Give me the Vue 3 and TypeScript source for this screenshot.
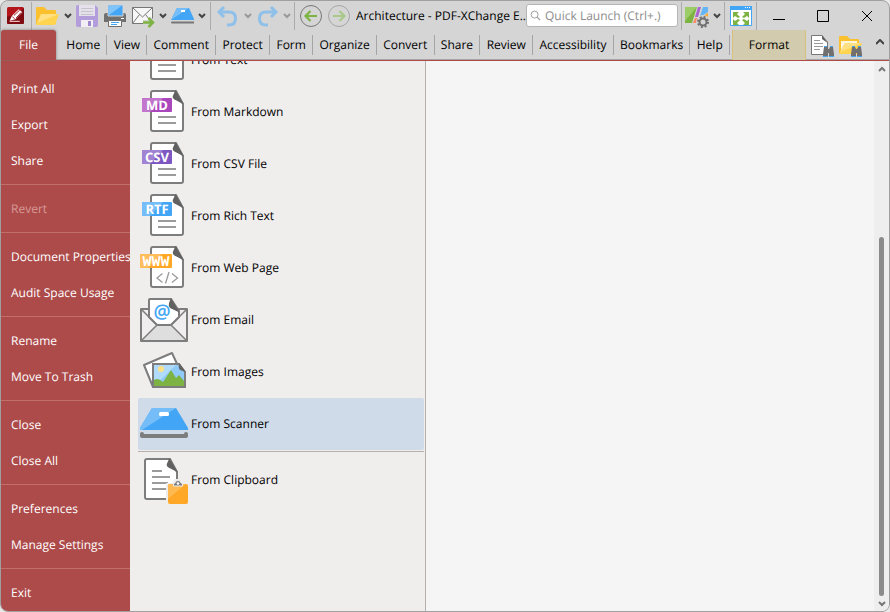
<script setup lang="ts">
import { ref } from 'vue'

interface MenuEntry {
  label: string
  disabled?: boolean
}

interface Source {
  label: string
  kind: 'doc' | 'web' | 'email' | 'images' | 'scanner' | 'clipboard'
  badge?: string
  dark?: string
  light?: string
}

const tabs: string[] = [
  'Home', 'View', 'Comment', 'Protect', 'Form', 'Organize',
  'Convert', 'Share', 'Review', 'Accessibility', 'Bookmarks', 'Help',
]

const menuGroups: MenuEntry[][] = [
  [{ label: 'Print All' }, { label: 'Export' }, { label: 'Share' }],
  [{ label: 'Revert', disabled: true }],
  [{ label: 'Document Properties' }, { label: 'Audit Space Usage' }],
  [{ label: 'Rename' }, { label: 'Move To Trash' }],
  [{ label: 'Close' }, { label: 'Close All' }],
  [{ label: 'Preferences' }, { label: 'Manage Settings' }],
  [{ label: 'Exit' }],
]

const sources: Source[] = [
  { label: 'From Text', kind: 'doc', badge: 'TXT', dark: '#777777', light: '#999999' },
  { label: 'From Markdown', kind: 'doc', badge: 'MD', dark: '#ab47bc', light: '#c175cd' },
  { label: 'From CSV File', kind: 'doc', badge: 'CSV', dark: '#7e57c2', light: '#a083d3' },
  { label: 'From Rich Text', kind: 'doc', badge: 'RTF', dark: '#42a5f5', light: '#74bdf8' },
  { label: 'From Web Page', kind: 'web', badge: 'WWW', dark: '#ffa726', light: '#ffbd5c' },
  { label: 'From Email', kind: 'email' },
  { label: 'From Images', kind: 'images' },
  { label: 'From Scanner', kind: 'scanner' },
]

const selected = ref<string>('From Scanner')
const query = ref<string>('')
</script>

<template>
  <div class="window">
    <header class="titlebar">
      <div class="group logo-group">
        <svg class="logo" viewBox="0 0 16 16" aria-hidden="true">
          <rect width="16" height="16" rx="1.5" fill="#b3151b" />
          <path d="M0 9Q9 8 16 1V14.500Q16 16 14.500 16H1.500Q0 16 0 14.500Z" fill="#7d0b10" />
          <path d="M2.500 13L4.500 8.500L11 2L14.500 5L8 11.500Z" fill="#fff" />
          <path d="M5 9L7 11M6.500 8L12 2.800M8.500 10.500L13.500 5" stroke="#a80f15" stroke-width=".9" />
          <path d="M2.500 13.500H12" stroke="#e9b9bb" />
        </svg>
      </div>

      <div class="group file-group">
        <button class="tool" aria-label="Open">
          <svg class="icon" viewBox="0 0 24 24">
            <path d="M0 4Q0 3 1 3H8L11 6H19Q20 6 20 7V20H0Z" fill="#fbc02d" />
            <path d="M5 10H23L19 21H0Z" fill="#ffd54f" />
            <path d="M5 10H23L1 19Z" fill="#ffe082" />
          </svg>
        </button>
        <button class="drop" aria-label="Open options"><svg viewBox="0 0 8 6"><path d="M1 1L4 4L7 1" /></svg></button>
        <button class="tool" aria-label="Save">
          <svg class="icon" viewBox="0 0 24 24">
            <path d="M1 3Q1 1 3 1H20L23 4V21Q23 23 21 23H3Q1 23 1 21Z" fill="#b39ddb" />
            <path d="M4 1H20V12H4Z" fill="#e4e0ec" />
            <path d="M6 4.500H18M6 7.500H18M6 10.500H18" stroke="#c7c4cc" />
            <path d="M6 16H18V23H6Z" fill="#f1eef6" />
            <path d="M13 17H16V22H13Z" fill="#9e86cc" />
          </svg>
        </button>
        <button class="tool" aria-label="Print">
          <svg class="icon" viewBox="0 0 24 24">
            <path d="M1 11Q1 9 3 9H21Q23 9 23 11V18H1Z" fill="#707070" />
            <path d="M5 1H20V12H5Z" fill="#42a5f5" stroke="#d5d5d5" />
            <path d="M5.500 1.500H19L5.500 11.500Z" fill="#81c4fa" />
            <path d="M18 14.500H21" stroke="#fff" />
            <path d="M5.500 16.500H18.500V22.500H5.500Z" fill="#fff" stroke="#707070" />
            <path d="M8 18.500H16M8 20.500H14" stroke="#42a5f5" />
          </svg>
        </button>
        <button class="tool" aria-label="Send by email">
          <svg class="icon" viewBox="0 0 24 24">
            <path d="M1.500 3.500H21.500V19.500H1.500Z" fill="#f7f7f7" stroke="#777" />
            <path d="M1.500 3.500L11.500 13L21.500 3.500M1.500 19.500L8.500 10.500M21.500 19.500L14.500 10.500" fill="none" stroke="#777" />
            <path d="M12 18.500H22M18 14.500L22 18.500L18 22.500" fill="none" stroke="#d5d5d5" stroke-width="5" />
            <path d="M12 18.500H21.500M17.500 14L22 18.500L17.500 23" fill="none" stroke="#7cb342" stroke-width="2.500" />
          </svg>
        </button>
        <button class="drop" aria-label="Email options"><svg viewBox="0 0 8 6"><path d="M1 1L4 4L7 1" /></svg></button>
        <button class="tool" aria-label="Scan">
          <svg class="icon" viewBox="0 0 24 24">
            <path d="M7 4H19L24.500 16H1Z" fill="#42a5f5" />
            <path d="M7 4H19L1 16Z" fill="#74bdf8" />
            <path d="M11 7H15" stroke="#fff" stroke-width="2" />
            <path d="M2 18.500H24" stroke="#777" stroke-width="2" stroke-linecap="round" />
          </svg>
        </button>
        <button class="drop" aria-label="Scan options"><svg viewBox="0 0 8 6"><path d="M1 1L4 4L7 1" /></svg></button>
      </div>

      <div class="group history-group">
        <button class="tool" aria-label="Undo">
          <svg class="icon" viewBox="0 0 24 24">
            <path d="M8 3L3 8L8 13M3 8H13Q19.500 8 19.500 14.500Q19.500 21 13 21H11" fill="none" stroke="#8ec0ea" stroke-width="3" />
          </svg>
        </button>
        <button class="drop faded" aria-label="Undo history"><svg viewBox="0 0 8 6"><path d="M1 1L4 4L7 1" /></svg></button>
        <button class="tool" aria-label="Redo">
          <svg class="icon" viewBox="0 0 24 24">
            <path d="M16 3L21 8L16 13M21 8H11Q4.500 8 4.500 14.500Q4.500 21 11 21H13" fill="none" stroke="#8ec0ea" stroke-width="3" />
          </svg>
        </button>
        <button class="drop faded" aria-label="Redo history"><svg viewBox="0 0 8 6"><path d="M1 1L4 4L7 1" /></svg></button>
      </div>

      <div class="group nav-group">
        <button class="tool" aria-label="Back">
          <svg class="icon" viewBox="0 0 24 24">
            <circle cx="11" cy="12" r="10.500" fill="none" stroke="#777" />
            <path d="M17 12H6M10.500 7L5.500 12L10.500 17" fill="none" stroke="#7cb342" stroke-width="2.200" />
          </svg>
        </button>
        <button class="tool" aria-label="Forward">
          <svg class="icon" viewBox="0 0 24 24">
            <circle cx="11" cy="12" r="10.500" fill="none" stroke="#a5a5a5" />
            <path d="M5 12H16M11.500 7L16.500 12L11.500 17" fill="none" stroke="#a9c98a" stroke-width="2.200" />
          </svg>
        </button>
      </div>

      <h1 class="title">Architecture - PDF-XChange E..</h1>

      <label class="search">
        <svg viewBox="0 0 12 12" aria-hidden="true">
          <circle cx="5" cy="5" r="3.800" fill="none" stroke="#999" />
          <path d="M7.800 7.800L11 11" stroke="#999" stroke-width="1.300" />
        </svg>
        <input v-model="query" type="text" placeholder="Quick Launch (Ctrl+.)" aria-label="Quick Launch" />
      </label>

      <div class="group options-group">
        <button class="tool" aria-label="UI options">
          <svg class="icon" viewBox="0 0 24 24">
            <path d="M0 3H12L7 19H0Z" fill="#7cb342" />
            <path d="M0 3H12L0 17Z" fill="#9ccc65" />
            <path d="M13 3H16L13 13H10Z" fill="#ab63d0" />
            <path d="M18 3H23V8L17 12H15Z" fill="#64b5f6" />
            <path d="M18 12L23 9V13H18Z" fill="#ffa726" />
            <path d="M8 19L10 14H14L12 19Z" fill="#ff8a65" />
            <circle cx="18" cy="18" r="7" fill="#d5d5d5" />
            <circle cx="18" cy="18" r="3.500" fill="none" stroke="#707070" stroke-width="2" />
            <circle cx="18" cy="18" r="5" fill="none" stroke="#707070" stroke-width="2" stroke-dasharray="2 1.927" />
          </svg>
        </button>
        <button class="drop" aria-label="UI options menu"><svg viewBox="0 0 8 6"><path d="M1 1L4 4L7 1" /></svg></button>
      </div>

      <div class="group screen-group">
        <button class="tool" aria-label="Full screen">
          <svg class="icon" viewBox="0 0 24 24">
            <path d="M1.500 2.500H22.500V21.500H1.500Z" fill="#fff" stroke="#42a5f5" />
            <path d="M1 2H23V6H1Z" fill="#42a5f5" />
            <path d="M16 3.500H17M18 3.500H19M20 3.500H21" stroke="#fff" />
            <path d="M4 8H10L8 10L11 13L9 14L6 12L4 14ZM20 8H14L16 10L13 13L15 14L18 12L20 14ZM4 21H10L8 19L11 16L9 15L6 17L4 15ZM20 21H14L16 19L13 16L15 15L18 17L20 15Z" fill="#7cb342" />
          </svg>
        </button>
      </div>

      <div class="controls">
        <button aria-label="Minimize"><svg viewBox="0 0 12 12"><path d="M0 9.500H12" /></svg></button>
        <button aria-label="Maximize"><svg viewBox="0 0 12 12"><path d="M.5 .5H11.500V11.500H.5Z" /></svg></button>
        <button aria-label="Close window"><svg viewBox="0 0 12 12"><path d="M1 1L11 11M11 1L1 11" /></svg></button>
      </div>
    </header>

    <nav class="ribbon" aria-label="Ribbon">
      <button class="file-tab">File</button>
      <div class="tabs">
        <button v-for="tab in tabs" :key="tab" class="tab">{{ tab }}</button>
      </div>
      <button class="format-tab">Format</button>
      <div class="finders">
        <button class="tool" aria-label="Find in document">
          <svg class="icon" viewBox="0 0 24 24">
            <path d="M.5 1.500H11L16.500 8V20.500H.5Z" fill="#fff" stroke="#777" />
            <path d="M11 1V5L16.500 9Z" fill="#5f5f5f" />
            <path d="M3 6.500H9M3 9.500H12M3 12.500H12M3 15.500H9" stroke="#999" />
            <path d="M13 13H16L17 15H18L19 13H22L23 20V23H18V19H17V23H12V20Z" fill="#707070" />
            <path d="M13 12.500H16M19 12.500H22M12 22.500H17M18 22.500H23" stroke="#42a5f5" />
          </svg>
        </button>
        <button class="tool" aria-label="Search folders">
          <svg class="icon" viewBox="0 0 24 24">
            <path d="M0 3Q0 2 1 2H8L11 5H19Q20 5 20 6V19H0Z" fill="#fbc02d" />
            <path d="M2 7H18V18H2Z" fill="#fff5dc" />
            <path d="M6 9H23L19 20H0Z" fill="#ffd54f" />
            <path d="M6 9H23L1 18Z" fill="#ffe082" />
            <path d="M13 13H16L17 15H18L19 13H22L23 20V23H18V19H17V23H12V20Z" fill="#707070" />
            <path d="M13 12.500H16M19 12.500H22M12 22.500H17M18 22.500H23" stroke="#42a5f5" />
          </svg>
        </button>
      </div>
      <button class="collapse" aria-label="Collapse ribbon"><svg viewBox="0 0 8 6"><path d="M0 5L4 1L8 5" /></svg></button>
    </nav>

    <div class="backstage">
      <aside class="sidebar">
        <ul v-for="(group, index) in menuGroups" :key="index" class="menu-group">
          <li v-for="entry in group" :key="entry.label">
            <button class="menu-item" :disabled="entry.disabled">{{ entry.label }}</button>
          </li>
        </ul>
      </aside>

      <section class="sources" aria-label="New document">
        <div class="source-list">
          <button
            v-for="source in sources"
            :key="source.label"
            class="source"
            :class="{ selected: selected === source.label }"
            @click="selected = source.label"
          >
            <svg class="source-icon" viewBox="0 0 50 52" aria-hidden="true">
              <template v-if="source.kind === 'doc' || source.kind === 'web'">
                <path d="M15 5H38L45 18V43Q45 45 43 45H15Q13 45 13 43V7Q13 5 15 5Z" fill="#fff" stroke="#7d7d7d" stroke-width="2" />
                <path d="M37.500 4L46 18.500L36.500 13.500Q34 12 35 9.500Z" fill="#616161" />
                <path v-if="source.kind === 'doc'" d="M20 31H38M20 37H38" stroke="#9b9b9b" stroke-width="2" />
                <path v-else d="M24.500 31.500L19 36L24.500 40.500M34 31.500L39.500 36L34 40.500M31 30L27.500 41.500" fill="none" stroke="#9b9b9b" stroke-width="1.300" />
                <rect :x="source.kind === 'web' ? 2 : 4" y="12" :width="source.kind === 'web' ? 32 : 30" height="14" rx="1" :fill="source.dark" />
                <path :d="source.kind === 'web' ? 'M2 13Q2 12 3 12H24L10 26H3Q2 26 2 25Z' : 'M4 13Q4 12 5 12H25L12 26H5Q4 26 4 25Z'" :fill="source.light" />
                <text :x="source.kind === 'web' ? 18 : 19" y="24" text-anchor="middle" class="badge" :class="{ mono: source.kind === 'web' }">{{ source.badge }}</text>
              </template>
              <template v-else-if="source.kind === 'email'">
                <path d="M3 15H49V47H3Z" fill="#f0eeee" stroke="#7d7d7d" stroke-width="2" stroke-linejoin="round" />
                <path d="M19 31H33L48 46H4Z" fill="#dedede" />
                <path d="M11 23V6Q11 5 12 5H33L41 17V23L33 31H19Z" fill="#fff" stroke="#7d7d7d" stroke-width="2" />
                <path d="M33 4L41.500 18.500L32 14Q30 12 31 9Z" fill="#616161" />
                <path d="M3 15L19 31H33L49 15M19 31L3 47M33 31L49 47" fill="none" stroke="#7d7d7d" stroke-width="1.500" />
                <text x="24" y="24" text-anchor="middle" class="at">@</text>
              </template>
              <template v-else-if="source.kind === 'images'">
                <path d="M6 19L34 7L46 33L15 41Z" fill="#fff" stroke="#7d7d7d" stroke-width="2" stroke-linejoin="round" />
                <path d="M15 18H41L47 26V41H15Z" fill="#90caf9" stroke="#7d7d7d" stroke-width="2" />
                <path d="M16 19H38L16 40Z" fill="#b1dbfb" />
                <circle cx="23" cy="23" r="3" fill="#ffe082" />
                <path d="M16 40V34Q20 31 25 36L33 24L38 32L41 29L46 35V40Z" fill="#7cb342" />
                <path d="M41 17L48 26L42 24Q40 22 41 17Z" fill="#616161" />
              </template>
              <template v-else-if="source.kind === 'scanner'">
                <path d="M14 10H38L50 30V32H2V30Z" fill="#42a5f5" />
                <path d="M14 10H38L4 32H2V30Z" fill="#74bdf8" />
                <rect x="21" y="14" width="10" height="4" rx="1.500" fill="#fff" />
                <path d="M2 36Q2 34 4 34Q6 34 6 36H46Q46 34 48 34Q50 34 50 36V38Q50 40 47 40H5Q2 40 2 38Z" fill="#7d7d7d" />
              </template>
            </svg>
            <span>{{ source.label }}</span>
          </button>
          <hr />
          <button class="source" :class="{ selected: selected === 'From Clipboard' }" @click="selected = 'From Clipboard'">
            <svg class="source-icon" viewBox="0 0 50 52" aria-hidden="true">
              <path d="M9 5H32L39 18V43Q39 45 37 45H9Q7 45 7 43V7Q7 5 9 5Z" fill="#fff" stroke="#7d7d7d" stroke-width="2" />
              <path d="M31.500 4L40 18.500L30.500 13.500Q28 12 29 9.500Z" fill="#616161" />
              <path d="M14 17H24M14 23H32M14 29H30M14 35H28" stroke="#9b9b9b" stroke-width="2" />
              <path d="M28 29H34L37 25H43L46 29H50V50H28Z" fill="#f0eded" />
              <rect x="30" y="30" width="20" height="20" rx="2" fill="#ffa726" />
              <path d="M30 32Q30 30 32 30H48L30 45Z" fill="#ffb951" />
              <path d="M35.500 32V30Q36 29 37 29Q37 26.500 40 26.500Q43 26.500 43 29Q44 29 44.500 30V32Z" fill="#7d7d7d" stroke="#f0eded" />
              <circle cx="40" cy="29.500" r="1.300" fill="#fff" />
            </svg>
            <span>From Clipboard</span>
          </button>
        </div>
      </section>

      <main class="canvas"></main>

      <div class="scrollbar">
        <button aria-label="Scroll up"><svg viewBox="0 0 8 6"><path d="M1 5L4 2L7 5" /></svg></button>
        <div class="track"><div class="thumb"></div></div>
        <button aria-label="Scroll down"><svg viewBox="0 0 8 6"><path d="M1 1L4 4L7 1" /></svg></button>
      </div>
    </div>
  </div>
</template>

<style>
body {
  background: #e9e9e9;
}
</style>

<style scoped>
* {
  box-sizing: border-box;
}

.window {
  display: flex;
  flex-direction: column;
  height: 100vh;
  overflow: hidden;
  border: 1px solid #a0a0a0;
  border-radius: 8px;
  background: #d5d5d5;
  color: #000;
  font: 12px/16px "Open Sans", "Noto Sans", sans-serif;
  text-rendering: geometricPrecision;
}

button {
  margin: 0;
  padding: 0;
  border: 0;
  background: none;
  color: inherit;
  font: inherit;
  text-rendering: inherit;
  white-space: nowrap;
}

svg {
  display: block;
}

.titlebar {
  display: flex;
  align-items: center;
  flex: none;
  height: 29px;
}

.group {
  display: flex;
  align-items: center;
  flex: none;
  height: 28px;
  border-right: 1px solid #ababab;
}

.logo-group {
  padding: 0 7px 0 6px;
}

.logo {
  width: 17px;
  height: 17px;
}

.file-group {
  padding: 0 1px 0 4px;
}

.history-group {
  padding-left: 5px;
}

.nav-group {
  padding: 0 4px 0 5px;
  border-right: 0;
}

.options-group {
  margin-left: 3px;
  padding-left: 3px;
  border-left: 1px solid #ababab;
}

.screen-group {
  padding: 0 3px 0 4px;
}

.tool,
.icon {
  flex: none;
  width: 24px;
  height: 24px;
}

.tool + .tool {
  margin-left: 4px;
}

.drop {
  flex: none;
  width: 15px;
  height: 24px;
}

.drop svg,
.collapse svg,
.scrollbar svg {
  width: 8px;
  height: 6px;
  margin: auto;
  fill: none;
  stroke: #444;
  stroke-width: 2;
}

.drop.faded svg {
  stroke: #999;
}

.title {
  flex: 1 1 166px;
  min-width: 0;
  margin: 0;
  overflow: hidden;
  font: inherit;
  white-space: nowrap;
}

.search {
  display: flex;
  align-items: center;
  flex: 0 0 152px;
  gap: 4px;
  height: 23px;
  padding: 0 3px;
  border: 1px solid #b5b5b5;
  border-radius: 3px;
  background: #fff;
}

.search svg {
  flex: none;
  width: 11px;
  height: 11px;
}

.search input {
  width: 100%;
  min-width: 0;
  padding: 0;
  border: 0;
  outline: 0;
  background: none;
  color: #000;
  font: inherit;
  text-rendering: inherit;
}

.search input::placeholder {
  color: #8c8c8c;
  opacity: 1;
}

.controls {
  display: flex;
  flex: none;
}

.controls button {
  width: 44px;
  height: 28px;
}

.controls svg {
  width: 12px;
  height: 12px;
  margin: auto;
  fill: none;
  stroke: #000;
}

.ribbon {
  display: flex;
  flex: none;
  height: 31px;
  border-bottom: 1px solid #ad4a4a;
  box-shadow: inset 0 -1px #a8a4a4;
}

.file-tab {
  flex: none;
  width: 55px;
  border-radius: 3px 3px 0 0;
  background: #ad4a4a;
  box-shadow: 0 0 3px #777;
  color: #fff;
}

.tabs {
  display: flex;
  flex: 0 1 676px;
  align-items: center;
  padding: 0 2px 0 4px;
}

.tab {
  flex: 1 1 auto;
  height: 20px;
  border-right: 1px solid #a5a5a5;
}

.format-tab {
  flex: none;
  width: 74px;
  border: solid #d6c27c;
  border-width: 0 1px;
  background: #d3cbad;
}

.finders {
  display: flex;
  align-items: center;
  flex: none;
  padding: 2px 4px 0 5px;
}

.collapse {
  width: 18px;
  height: 24px;
  margin-left: auto;
}

.backstage {
  display: flex;
  flex: 1;
  min-height: 0;
}

.sidebar {
  flex: none;
  width: 129px;
  padding-top: 10px;
  overflow: hidden;
  background: #ad4a4a;
  color: #fff;
}

.menu-group {
  margin: 0;
  padding: 0;
  list-style: none;
}

.menu-group + .menu-group {
  margin-top: 5px;
  padding-top: 6px;
  border-top: 1px solid #bf6f6c;
}

.menu-item {
  display: block;
  width: 100%;
  height: 36px;
  padding-left: 10px;
  text-align: left;
}

.menu-item:disabled {
  color: #d79a98;
}

.sources {
  flex: none;
  width: 296px;
  padding: 0 1px 0 8px;
  overflow: hidden;
  border-right: 1px solid #b5afae;
  background: #f0eded;
}

.source-list {
  margin-top: -27px;
}

.source {
  display: flex;
  align-items: center;
  gap: 3px;
  width: 100%;
  height: 52px;
  border-radius: 2px;
}

.source.selected {
  background: #cfdbe9;
}

.source-icon {
  flex: none;
  width: 50px;
  height: 52px;
}

.badge {
  fill: #fff;
  font: 700 13px "Open Sans", sans-serif;
}

.badge.mono {
  font: 700 15px "Liberation Mono", monospace;
}

.at {
  fill: #42a5f5;
  font: 600 19px "Open Sans", sans-serif;
}

hr {
  height: 1px;
  margin: 1px 0 2px;
  border: 0;
  background: #b5afae;
}

.canvas {
  flex: 1;
  background: #f5f5f5;
}

.scrollbar {
  display: flex;
  flex-direction: column;
  align-items: center;
  flex: none;
  width: 15px;
  background: #eee;
}

.scrollbar button {
  width: 15px;
  height: 15px;
}

.scrollbar svg {
  stroke: #777;
}

.track {
  display: flex;
  flex: 1;
  flex-direction: column;
  justify-content: flex-end;
}

.thumb {
  width: 5px;
  height: 69%;
  border-radius: 3px;
  background: #8b8b8b;
}
</style>
